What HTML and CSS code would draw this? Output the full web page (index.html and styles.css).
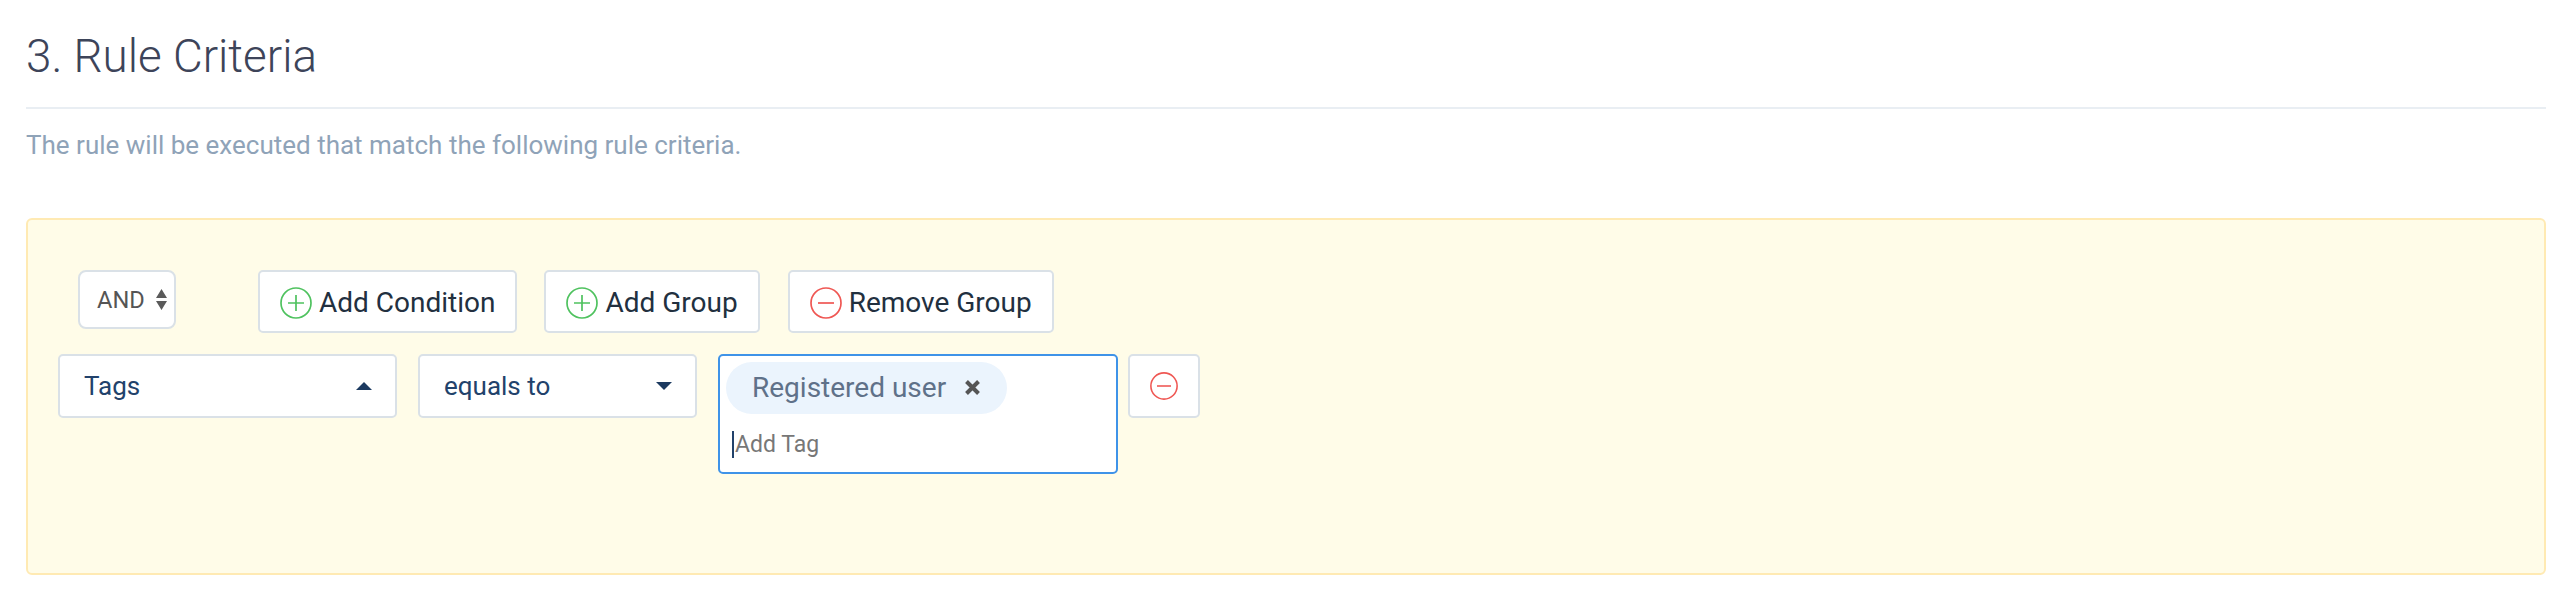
FILE: index.html
```html
<!DOCTYPE html>
<html lang="en">
<head>
  <meta charset="UTF-8">
  <title>Rule Criteria</title>
  <link rel="stylesheet" href="styles.css">
</head>
<body>
  <div class="section">
    <!-- Header -->
    <div class="section-header">
      <h2>3. Rule Criteria</h2>
    </div>
    <p class="section-help">The rule will be executed that match the following rule criteria.</p>

    <!-- Criteria group -->
    <div class="group">
      <div class="group-actions">
        <div class="logic-select">
          <span>AND</span>
          <svg class="logic-arrows" width="11" height="21" viewBox="0 0 11 21"><path d="M5.5 0 11 9H0zM0 12h11l-5.500 9z" fill="#5a5a5a"/></svg>
        </div>
        <button class="btn">
          <svg class="icon" width="32" height="32" viewBox="0 0 32 32" fill="none" stroke="#4fc25f" stroke-width="1.700"><circle cx="16" cy="16" r="15"/><path d="M16 8v16M8 16h16"/></svg>
          Add Condition
        </button>
        <button class="btn btn-add-group">
          <svg class="icon" width="32" height="32" viewBox="0 0 32 32" fill="none" stroke="#4fc25f" stroke-width="1.700"><circle cx="16" cy="16" r="15"/><path d="M16 8v16M8 16h16"/></svg>
          Add Group
        </button>
        <button class="btn">
          <svg class="icon" width="32" height="32" viewBox="0 0 32 32" fill="none" stroke="#ef5753" stroke-width="1.700"><circle cx="16" cy="16" r="15"/><path d="M8 16h16"/></svg>
          Remove Group
        </button>
      </div>

      <div class="condition">
        <div class="select select-field">
          <span>Tags</span>
          <span class="caret caret-up"></span>
        </div>
        <div class="select select-operator">
          <span>equals to</span>
          <span class="caret caret-down"></span>
        </div>
        <div class="tag-input">
          <div class="tag">
            <span>Registered user</span>
            <svg width="15" height="15" viewBox="0 0 15 15" stroke="#555" stroke-width="4"><path d="M1.500 1.500l12 12M13.500 1.500l-12 12"/></svg>
          </div>
          <div class="tag-placeholder">Add Tag</div>
        </div>
        <button class="btn btn-remove">
          <svg width="28" height="28" viewBox="0 0 32 32" fill="none" stroke="#ef5753" stroke-width="1.800"><circle cx="16" cy="16" r="15"/><path d="M8 16h16"/></svg>
        </button>
      </div>
    </div>
  </div>
</body>
</html>
```

FILE: styles.css
```css
/* Reset and base styles */
* {
  margin: 0;
  padding: 0;
  box-sizing: border-box;
  font-family: Roboto, 'Noto Sans', sans-serif;
}

body {
  background-color: #fff;
  color: #22292f;
}

.section {
  padding: 0 24px 0 26px;
}

/* Header styles */
.section-header {
  height: 109px;
  padding-top: 30px;
  border-bottom: 2px solid #e9eef3;
}

.section-header h2 {
  font-size: 45.8px;
  font-weight: 300;
  line-height: 54px;
  color: #3d4459;
}

.section-help {
  margin-top: 18px;
  font-size: 26px;
  line-height: 36px;
  color: #8fa3b8;
}

/* Criteria group */
.group {
  height: 357px;
  margin-top: 55px;
  padding: 50px 30px 0;
  background-color: #fffce8;
  border: 2px solid #ffeab3;
  border-radius: 6px;
}

.group-actions {
  display: flex;
  align-items: flex-start;
  margin-left: 20px;
}

.logic-select {
  display: flex;
  align-items: center;
  width: 98px;
  height: 59px;
  padding-left: 17px;
  margin-right: 82px;
  background-color: #fff;
  border: 2px solid #dae1e7;
  border-radius: 8px;
  font-size: 23.6px;
  color: #555;
}

.logic-arrows {
  margin-left: 11px;
}

.btn {
  display: flex;
  align-items: center;
  height: 63px;
  padding: 2px 20px 0;
  margin-right: 27px;
  background-color: #fff;
  border: 2px solid #dae1e7;
  border-radius: 5px;
  font-size: 28px;
  color: #22303f;
}

.btn-add-group {
  margin-right: 28px;
}

.icon {
  margin-right: 7px;
}

.condition {
  display: flex;
  align-items: flex-start;
  margin-top: 21px;
}

.select {
  display: flex;
  justify-content: space-between;
  align-items: center;
  height: 64px;
  margin-right: 21px;
  padding: 0 23px 0 24px;
  background-color: #fff;
  border: 2px solid #dae1e7;
  border-radius: 5px;
  font-size: 26px;
  color: #22426b;
}

.select-field {
  width: 339px;
}

.select-operator {
  width: 279px;
}

.caret {
  width: 0;
  height: 0;
  border-left: 8px solid transparent;
  border-right: 8px solid transparent;
}

.caret-up {
  border-bottom: 8px solid #1c3a60;
}

.caret-down {
  border-top: 8px solid #1c3a60;
}

/* Tags */
.tag-input {
  width: 400px;
  height: 120px;
  margin-right: 10px;
  padding: 6px 6px 0;
  background-color: #fff;
  border: 2px solid #3f93e8;
  border-radius: 5px;
}

.tag {
  display: inline-flex;
  align-items: center;
  height: 52px;
  padding: 0 27px 2px 26px;
  background-color: #ebf4fd;
  border-radius: 26px;
  font-size: 28px;
  color: #5f7189;
}

.tag svg {
  margin-left: 19px;
}

.tag-placeholder {
  display: flex;
  align-items: center;
  height: 27px;
  margin: 17px 0 0 6px;
  padding-left: 1px;
  border-left: 2px solid #22426b;
  font-size: 23px;
  color: #777;
}

.btn-remove {
  justify-content: center;
  width: 72px;
  height: 64px;
  padding: 0;
  margin-right: 0;
}
```
